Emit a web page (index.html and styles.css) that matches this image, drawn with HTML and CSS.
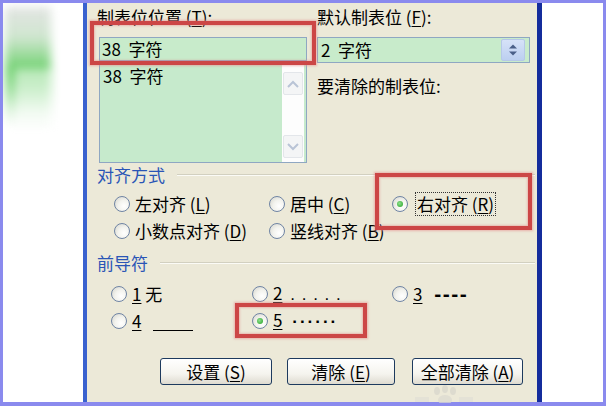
FILE: index.html
```html
<!DOCTYPE html>
<html lang="zh-CN">
<head>
<meta charset="utf-8">
<title>制表位</title>
<link rel="stylesheet" href="styles.css">
</head>
<body>
<div class="frame">
  <div class="canvas">
    <div class="side"><div class="blob"></div><div class="blob2"></div></div>
    <div class="dialog">
      <div class="top">
        <div class="col-left">
          <div class="label">制表位位置 (<u>T</u>):</div>
          <div class="edit">38&nbsp; 字符</div>
          <div class="list">
            <div class="list-items"><div class="item">38&nbsp; 字符</div></div>
            <div class="vscroll">
              <div class="sbtn"><svg width="14" height="8" viewBox="0 0 14 8"><path d="M2 7 L7 2 L12 7" fill="none" stroke="#b9c4d6" stroke-width="2"/></svg></div>
              <div class="sbtn"><svg width="14" height="8" viewBox="0 0 14 8"><path d="M2 1 L7 6 L12 1" fill="none" stroke="#b9c4d6" stroke-width="2"/></svg></div>
            </div>
          </div>
        </div>
        <div class="col-right">
          <div class="label">默认制表位 (<u>F</u>):</div>
          <div class="spin">
            <span class="spin-text">2&nbsp; 字符</span>
            <div class="spinbtn"><svg width="12" height="16" viewBox="0 0 12 16"><path d="M2 6.5 L6 2.5 L10 6.5 Z M2 9.5 L6 13.5 L10 9.5 Z" fill="#4a5f88"/></svg></div>
          </div>
          <div class="label label2">要清除的制表位:</div>
        </div>
      </div>

      <div class="group-head"><span class="gtitle">对齐方式</span><span class="gline"></span></div>
      <div class="grid align-grid">
        <div class="radio"><span class="rb"></span><span class="rt">左对齐 (<u>L</u>)</span></div>
        <div class="radio"><span class="rb"></span><span class="rt">居中 (<u>C</u>)</span></div>
        <div class="radio"><span class="rb on"></span><span class="rt focus">右对齐 (<u>R</u>)</span></div>
        <div class="radio"><span class="rb"></span><span class="rt">小数点对齐 (<u>D</u>)</span></div>
        <div class="radio"><span class="rb"></span><span class="rt">竖线对齐 (<u>B</u>)</span></div>
      </div>

      <div class="group-head lead-head"><span class="gtitle">前导符</span><span class="gline"></span></div>
      <div class="grid lead-grid">
        <div class="radio"><span class="rb"></span><span class="rt"><u>1</u> 无</span></div>
        <div class="radio"><span class="rb"></span><span class="rt"><u>2</u> <span class="dots-sp">. . . . .</span></span></div>
        <div class="radio"><span class="rb"></span><span class="rt"><u>3</u> <span class="dash">----</span></span></div>
        <div class="radio"><span class="rb"></span><span class="rt"><u>4</u> <span class="uline"></span></span></div>
        <div class="radio"><span class="rb on"></span><span class="rt"><u>5</u> <span class="mdots">······</span></span></div>
      </div>

      <div class="buttons">
        <div class="btn b1">设置 (<u>S</u>)</div>
        <div class="btn b2">清除 (<u>E</u>)</div>
        <div class="btn b3">全部清除 (<u>A</u>)</div>
      </div>

      <div class="mark mark1"></div>
      <div class="mark mark2"></div>
      <div class="mark mark3"></div>
      <svg class="paw" width="60" height="20" viewBox="0 0 60 20">
        <ellipse cx="22" cy="8" rx="3" ry="4" fill="#d8d6cc"/>
        <ellipse cx="30" cy="6" rx="3" ry="4" fill="#d8d6cc"/>
        <ellipse cx="38" cy="8" rx="3" ry="4" fill="#d8d6cc"/>
        <ellipse cx="30" cy="17" rx="7" ry="5" fill="#dcdad0"/>
        <rect x="0" y="14" width="14" height="5" fill="#e2e0d6"/>
        <rect x="44" y="14" width="14" height="5" fill="#e2e0d6"/>
      </svg>
    </div>
    <div class="rightpad"></div>
  </div>
</div>
</body>
</html>
```

FILE: styles.css
```css
html, body {
  margin: 0;
  padding: 0;
}
body {
  width: 606px;
  height: 406px;
  overflow: hidden;
  font-family: "Noto Sans CJK SC", "Liberation Sans", sans-serif;
  font-size: 17px;
  color: #000;
}
.frame {
  width: 606px;
  height: 406px;
  box-sizing: border-box;
  padding: 3px 3px 4px 3px;
  background: #8a8aee;
}
.canvas {
  display: flex;
  height: 100%;
  background: #fff;
}
.side {
  width: 80px;
  flex: none;
  overflow: hidden;
}
.blob {
  width: 46px;
  height: 120px;
  margin: 4px 0 0 2px;
  background: linear-gradient(180deg, #e2e4e2 0%, #d0e6d0 25%, #72d272 52%, #98de98 68%, #e4f6e4 88%, #ffffff 100%);
  filter: blur(5px);
}
.blob2 {
  width: 42px;
  height: 56px;
  margin: -58px 0 0 12px;
  background: rgba(255,255,255,0.5);
  filter: blur(4px);
}
.dialog {
  position: relative;
  width: 450px;
  flex: none;
  background: #ece9d8;
  border-left: 4px solid #3a62cf;
  border-right: 5px solid #142c9c;
  display: flex;
  flex-direction: column;
}
.rightpad {
  flex: 1;
}
u {
  text-decoration: underline;
  text-underline-offset: 2px;
}

/* top */
.top {
  display: flex;
  padding-top: 5px;
}
.label {
  height: 18px;
  line-height: 18px;
  white-space: nowrap;
}
.col-left {
  width: 210px;
  margin-left: 10px;
}
.edit {
  margin: 11px 0 0 2px;
  width: 208px;
  height: 24px;
  box-sizing: border-box;
  border: 1px solid #8fa7c2;
  background: #c8ebcb;
  line-height: 22px;
  padding-left: 2px;
}
.list {
  margin: 2px 0 0 2px;
  width: 208px;
  height: 100px;
  box-sizing: border-box;
  border: 1px solid #8fa7c2;
  background: #c6eacc;
  display: flex;
}
.list-items {
  flex: 1;
}
.item {
  line-height: 20px;
  padding: 2px 0 0 3px;
}
.vscroll {
  width: 22px;
  margin: 0 2px 0 0;
  background: #fdfdfd;
  display: flex;
  flex-direction: column;
  justify-content: space-between;
  padding: 8px 0 4px 0;
}
.sbtn {
  height: 21px;
  margin: 0 1px;
  border: 1px solid #e3e6ea;
  border-radius: 2px;
  background: #f4f5f6;
  display: flex;
  align-items: center;
  justify-content: center;
}
.col-right {
  width: 213px;
  margin-left: 10px;
}
.spin {
  margin-top: 11px;
  height: 26px;
  box-sizing: border-box;
  border: 1px solid #8fa7c2;
  background: #c8ebcb;
  display: flex;
  align-items: center;
  justify-content: space-between;
  padding: 0 4px 0 3px;
}
.spin-text {
  line-height: 22px;
}
.spinbtn {
  width: 24px;
  height: 22px;
  box-sizing: border-box;
  border: 1px solid #b6c8e8;
  border-radius: 2px;
  background: linear-gradient(180deg, #d6e2f8, #bccff0);
  display: flex;
  align-items: center;
  justify-content: center;
}
.label2 {
  margin-top: 14px;
}

/* group headers */
.group-head {
  display: flex;
  align-items: center;
  height: 18px;
  margin: 3px 2px 0 10px;
}
.lead-head {
  margin-top: 10px;
}
.gtitle {
  color: #2a55b6;
  line-height: 18px;
}
.gline {
  flex: 1;
  height: 1px;
  background: #d2d0c0;
  margin-left: 12px;
  border-bottom: 1px solid #fbfbf6;
}

/* radios */
.grid {
  display: grid;
  grid-auto-rows: 27px;
}
.align-grid {
  margin-top: 6px;
  padding-left: 27px;
  grid-template-columns: 155px 123px auto;
}
.lead-grid {
  margin-top: 8px;
  padding-left: 24px;
  grid-template-columns: 141px 140px auto;
}
.radio {
  display: flex;
  align-items: center;
  white-space: nowrap;
}
.rb {
  flex: none;
  position: relative;
  width: 16px;
  height: 16px;
  box-sizing: border-box;
  border-radius: 50%;
  border: 1px solid #6f84a4;
  background: radial-gradient(circle at 65% 65%, #ffffff 0%, #f3f3ee 45%, #d2d2c9 100%);
}
.rb.on::after {
  content: "";
  position: absolute;
  left: 4px;
  top: 4px;
  width: 6px;
  height: 6px;
  border-radius: 50%;
  background: radial-gradient(circle at 40% 40%, #8ee08e, #22a022);
}
.rt {
  margin-left: 5px;
  line-height: 20px;
}
.rt.focus {
  margin-left: 9px;
  outline: 1px dotted #333;
  outline-offset: 1px;
}
.dots-sp {
  margin-left: 4px;
  letter-spacing: 1px;
  font-family: "Liberation Sans", sans-serif;
}
.dash {
  margin-left: 8px;
  letter-spacing: 1.5px;
  font-family: "Liberation Sans", sans-serif;
  font-size: 21px;
  line-height: 20px;
  font-weight: bold;
}
.uline {
  display: inline-block;
  width: 40px;
  height: 1px;
  background: #000;
  margin-left: 8px;
  vertical-align: -3px;
}
.mdots {
  margin-left: 6px;
  font-family: "Liberation Sans", sans-serif;
  font-weight: bold;
  letter-spacing: 2px;
}

/* buttons */
.buttons {
  display: flex;
  margin: 24px 0 0 73px;
}
.btn {
  height: 27px;
  box-sizing: border-box;
  border: 1px solid #1d3a5e;
  border-radius: 3px;
  background: linear-gradient(180deg, #ffffff 0%, #f5f4ee 60%, #dedbd0 100%);
  display: flex;
  align-items: center;
  justify-content: center;
  line-height: 20px;
}
.b1 { width: 112px; }
.b2 { width: 108px; margin-left: 15px; }
.b3 { width: 111px; margin-left: 17px; }

/* red highlight boxes */
.mark {
  position: absolute;
  box-sizing: border-box;
  border: 4px solid #cc4646;
  box-shadow: 0 0 2px 1px rgba(230, 140, 140, 0.6), inset 0 0 2px 1px rgba(230, 140, 140, 0.5);
}
.mark1 { left: 3px; top: 18px; width: 226px; height: 44px; }
.mark2 { left: 288px; top: 170px; width: 157px; height: 57px; }
.mark3 { left: 148px; top: 300px; width: 132px; height: 35px; }

/* faint watermark */
.paw {
  position: absolute;
  left: 328px;
  top: 380px;
  opacity: 0.7;
}
```
